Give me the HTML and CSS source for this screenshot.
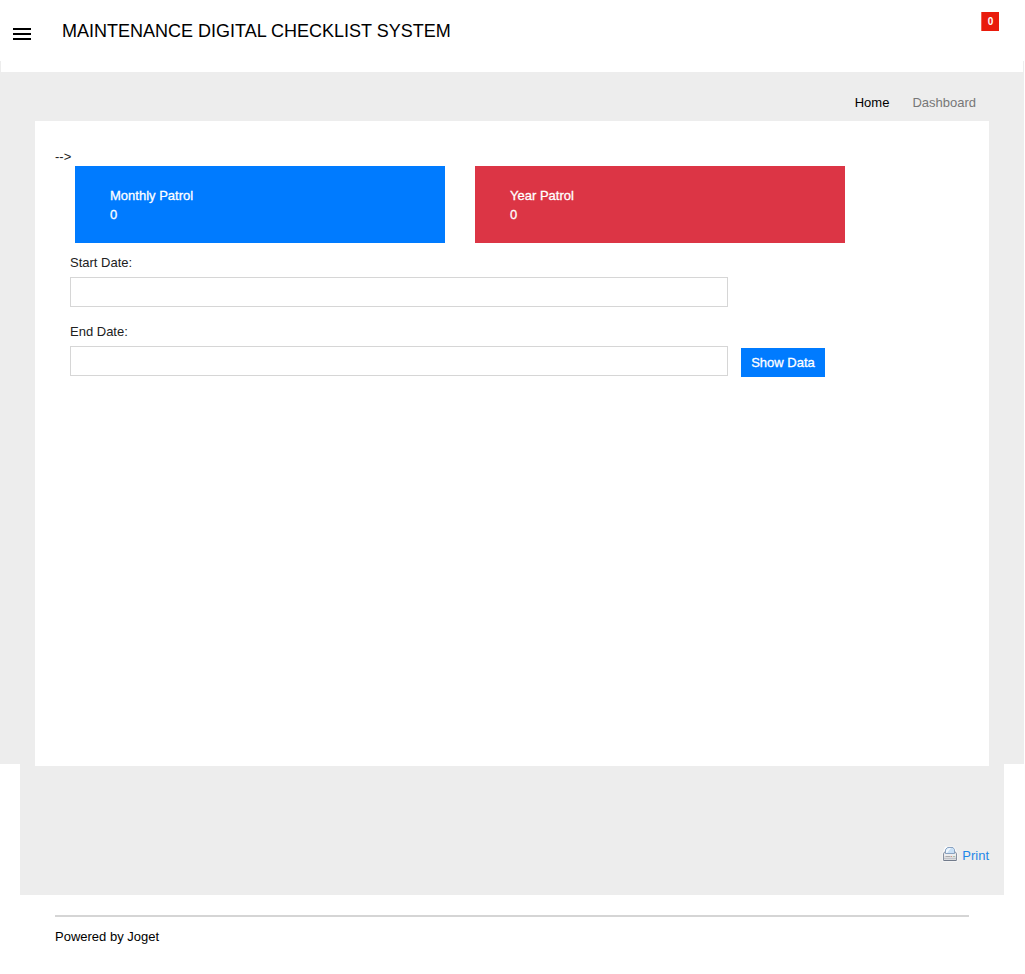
FILE: index.html
```html
<!DOCTYPE html>
<html lang="en">
<head>
<meta charset="utf-8">
<title>Maintenance Digital Checklist System</title>
<link rel="stylesheet" href="styles.css">
</head>
<body>
<div class="page">
  <header class="header">
    <button class="menu-toggle" aria-label="Menu"><span class="bar"></span><span class="bar"></span><span class="bar"></span></button>
    <div class="title"><span>MAINTENANCE DIGITAL CHECKLIST SYSTEM</span></div>
    <span class="badge">0</span>
  </header>
  <main class="main">
    <div class="container">
      <nav class="breadcrumb"><a class="crumb">Home</a><a class="crumb current">Dashboard</a></nav>
      <section class="content">
        <div class="stray">--&gt;</div>
        <div class="cards">
          <div class="card blue"><div>Monthly Patrol</div><div>0</div></div>
          <div class="card red"><div>Year Patrol</div><div>0</div></div>
        </div>
        <form class="filters">
          <label class="label" for="start">Start Date:</label>
          <input class="field" id="start" type="text">
          <label class="label end" for="end">End Date:</label>
          <div class="row">
            <input class="field" id="end" type="text">
            <button class="show" type="button">Show Data</button>
          </div>
        </form>
      </section>
      <a class="print">
        <svg class="printer" width="16" height="16" viewBox="0 0 16 16">
          <path d="M3 .5h9l3.5 6.5v8.500H.5V7z" fill="#fafafa"/>
          <path d="M1.500 7.500 3 5.500h10l1.500 2v7h-13z" fill="#dcdde0" stroke="#8790a0"/>
          <path d="M3.500 7.500v-4l2-2h5.500l1.500 2v4z" fill="#c9e0f6" stroke="#8aa2c0"/>
          <path d="M4 4.500 7 2h2L5 7H4z" fill="#f2f8fe"/>
          <path d="M2 8h12v2H2z" fill="#ededee"/>
          <path d="M3.500 10.500h5" stroke="#a9a9ac"/>
          <path d="M9 10.500h1" stroke="#d9917f"/>
          <path d="M11.500 10.500h1" stroke="#77a77a"/>
          <path d="M2 12.500h12" stroke="#c3c5ca"/>
          <path d="M2 14.500h12" stroke="#727b8b"/>
        </svg>
        <span>Print</span>
      </a>
    </div>
  </main>
  <footer class="footer">Powered by Joget</footer>
</div>
</body>
</html>
```
FILE: styles.css
```css
body {
  margin: 0;
  background: #fff;
  color: #212121;
  font: 13px/19px "Liberation Sans", Arial, sans-serif;
}
.page { width: 1024px; }
.header {
  box-sizing: border-box;
  height: 72px;
  display: flex;
  align-items: flex-start;
  padding: 12px 25px 0 13px;
  background:
    linear-gradient(#ededed, #ededed) 0 61px / 1px 11px no-repeat,
    linear-gradient(#ededed, #ededed) 100% 61px / 1px 11px no-repeat,
    #fff;
}
.menu-toggle {
  display: flex;
  flex-direction: column;
  gap: 3px;
  width: 18px;
  margin: 16px 31px 0 0;
  padding: 0;
  border: 0;
  background: none;
}
.bar { height: 2px; background: #000; }
.title {
  flex: 1;
  margin-top: 9px;
  color: #000;
  font-size: 18px;
  line-height: 21px;
}
.badge {
  box-sizing: border-box;
  width: 18px;
  height: 19px;
  border-left: 1px solid #f0604f;
  background: #e91b0c;
  color: #fff;
  font-size: 10px;
  font-weight: bold;
  text-align: center;
}
.main {
  padding: 0 20px;
  background: linear-gradient(#ededed, #ededed) 0 0 / 100% 692px no-repeat;
}
.container {
  box-sizing: border-box;
  height: 823px;
  padding: 0 15px;
  background: #ededed;
}
.breadcrumb {
  box-sizing: border-box;
  height: 49px;
  display: flex;
  justify-content: flex-end;
  gap: 23px;
  padding: 21px 13px 0 0;
}
.crumb { color: #000; }
.current { color: #777; }
.content {
  box-sizing: border-box;
  height: 645px;
  padding: 26px 20px 0;
  background: #fff;
}
.cards { display: flex; gap: 30px; padding-left: 20px; }
.card {
  box-sizing: border-box;
  width: 370px;
  height: 77px;
  padding: 20px 35px;
  color: #fff;
  -webkit-text-stroke: 0.3px #fff;
}
.blue { background: #007bff; }
.red { background: #dc3545; }
.filters { padding: 10px 15px 0; }
.label { display: block; height: 24px; }
.end { margin-top: 15px; }
.field {
  display: block;
  box-sizing: border-box;
  width: 658px;
  height: 30px;
  border: 1px solid #d6d6d6;
  background: #fff;
}
.row { display: flex; gap: 13px; }
.show {
  width: 84px;
  height: 29px;
  margin-top: 2px;
  padding: 0;
  border: 0;
  background: #007bff;
  color: #fff;
  font: inherit;
  -webkit-text-stroke: 0.3px #fff;
}
.print {
  display: flex;
  justify-content: flex-end;
  gap: 4px;
  padding-top: 80px;
  color: #1e87e8;
}
.footer {
  margin: 20px 55px 0;
  border-top: 2px solid #d5d5d5;
  padding-top: 10px;
  color: #000;
}
```
